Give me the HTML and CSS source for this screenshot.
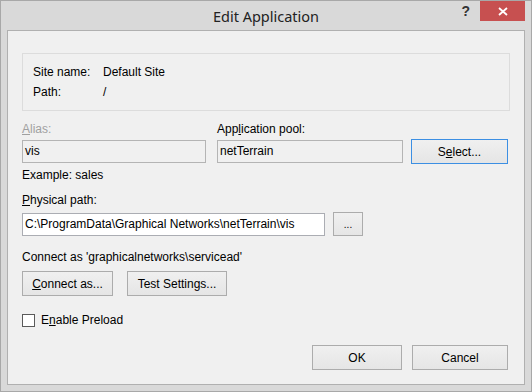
FILE: index.html
```html
<!DOCTYPE html>
<html lang="en">
<head>
    <meta charset="UTF-8">
    <link rel="stylesheet" href="styles.css">
    <title>Edit Application</title>
</head>
<body>
    <div class="window">
        <div class="titlebar">
            <span class="title">Edit Application</span>
            <span class="help">?</span>
            <span class="close">
                <svg width="10" height="9" viewBox="0 0 10 9">
                    <path d="M1 1 L9 8 M9 1 L1 8" stroke="#fff" stroke-width="1.8" />
                </svg>
            </span>
        </div>

        <div class="client">
            <div class="info">
                <div class="info-row"><span class="info-key">Site name:</span><span>Default Site</span></div>
                <div class="info-row"><span class="info-key">Path:</span><span>/</span></div>
            </div>

            <div class="label-row">
                <span class="alias-label disabled"><u>A</u>lias:</span>
                <span>App<u>l</u>ication pool:</span>
            </div>
            <div class="field-row">
                <div class="textbox readonly alias-box">vis</div>
                <div class="textbox readonly pool-box">netTerrain</div>
                <button class="btn default select-btn">S<u>e</u>lect...</button>
            </div>
            <div class="hint">Example: sales</div>

            <div class="label path-label"><u>P</u>hysical path:</div>
            <div class="field-row path-row">
                <div class="textbox path-box">C:\ProgramData\Graphical Networks\netTerrain\vis</div>
                <button class="btn browse-btn">...</button>
            </div>

            <div class="label connect-label">Connect as 'graphicalnetworks\servicead'</div>
            <div class="button-row">
                <button class="btn connect-btn"><u>C</u>onnect as...</button>
                <button class="btn test-btn">Test Settin<u>g</u>s...</button>
            </div>

            <div class="check-row">
                <span class="checkbox"></span>
                <span>E<u>n</u>able Preload</span>
            </div>

            <div class="footer">
                <button class="btn ok-btn">OK</button>
                <button class="btn cancel-btn">Cancel</button>
            </div>
        </div>
    </div>
</body>
</html>
```

FILE: styles.css
```css
body {
    margin: 0;
    font-family: 'Liberation Sans', Arial, sans-serif;
    font-size: 12px;
    color: #000;
    background: #fff;
}

.window {
    width: 532px;
    height: 392px;
    box-sizing: border-box;
    border: 1px solid #a8a8a8;
    background-color: #d9d9d9;
    padding: 0 6px 6px;
    display: flex;
    flex-direction: column;
}

.titlebar {
    position: relative;
    height: 29px;
    flex-shrink: 0;
    text-align: center;
}

.title {
    display: inline-block;
    margin-top: 5px;
    font-family: 'Noto Sans', sans-serif;
    font-size: 14.5px;
    line-height: 20px;
    color: #222;
}

.help {
    position: absolute;
    right: 55px;
    top: 2px;
    font-size: 14px;
    font-weight: bold;
    color: #333;
}

.close {
    position: absolute;
    right: 0;
    top: 0;
    width: 45px;
    height: 20px;
    background-color: #c75050;
    display: flex;
    align-items: center;
    justify-content: center;
}

.client {
    flex: 1;
    border: 1px solid #b0b0b0;
    background-color: #f0f0f0;
    padding: 22px 14px 0;
}

.info {
    border: 1px solid #dcdcdc;
    padding: 8px 10px;
}

.info-row {
    display: flex;
    line-height: 20px;
}

.info-key {
    width: 70px;
}

.label-row {
    display: flex;
    margin-top: 10px;
    line-height: 16px;
}

.alias-label {
    width: 195px;
}

.disabled {
    color: #a0a0a0;
}

.field-row {
    display: flex;
    align-items: center;
    margin-top: 2px;
}

.textbox {
    box-sizing: border-box;
    height: 23px;
    line-height: 21px;
    padding: 0 2px;
    border: 1px solid #abadb3;
    background-color: #fff;
    white-space: nowrap;
    overflow: hidden;
}

.readonly {
    background-color: #f0f0f0;
    border-color: #b4b4b4;
}

.alias-box {
    width: 184px;
    margin-right: 11px;
}

.pool-box {
    width: 186px;
    margin-right: 8px;
}

.btn {
    box-sizing: border-box;
    height: 25px;
    padding: 0;
    border: 1px solid #acacac;
    background: linear-gradient(#f0f0f0, #e5e5e5);
    font-family: inherit;
    font-size: 12px;
    color: #000;
}

.btn.default {
    border-color: #3c8fe3;
}

.select-btn {
    width: 97px;
}

.hint {
    margin-top: 3px;
    line-height: 16px;
}

.label {
    line-height: 16px;
}

.path-label {
    margin-top: 9px;
}

.path-row {
    margin-top: 4px;
}

.path-box {
    width: 303px;
    margin-right: 8px;
}

.browse-btn {
    width: 30px;
    height: 24px;
    font-size: 10px;
}

.connect-label {
    margin-top: 13px;
}

.button-row {
    display: flex;
    gap: 14px;
    margin-top: 6px;
}

.connect-btn {
    width: 91px;
}

.test-btn {
    width: 100px;
}

.check-row {
    display: flex;
    align-items: center;
    gap: 6px;
    margin-top: 16px;
    line-height: 16px;
}

.checkbox {
    box-sizing: border-box;
    width: 13px;
    height: 13px;
    border: 1px solid #5a5a5a;
    background-color: #fff;
}

.footer {
    display: flex;
    justify-content: flex-end;
    gap: 10px;
    margin-top: 17px;
    margin-right: 2px;
}

.ok-btn {
    width: 90px;
}

.cancel-btn {
    width: 96px;
}
```
